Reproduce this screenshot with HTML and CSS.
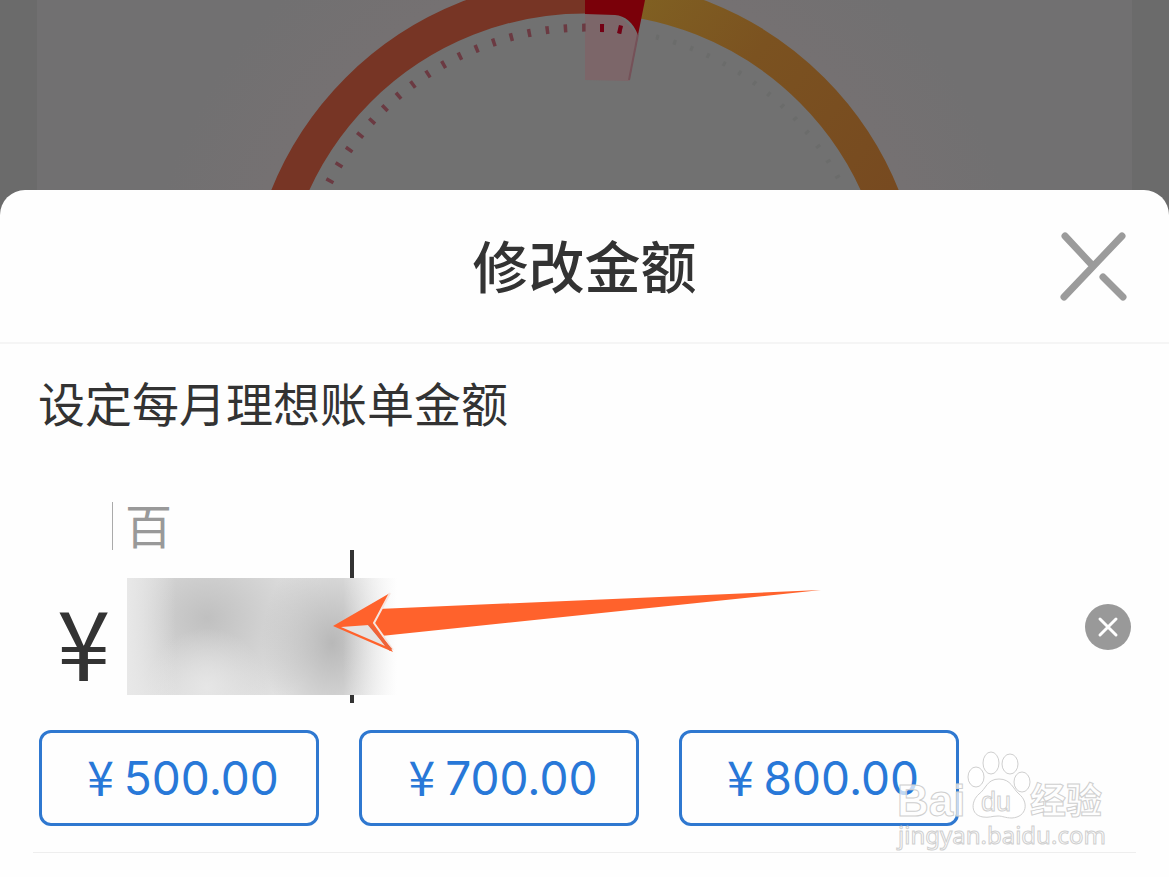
FILE: index.html
```html
<!DOCTYPE html>
<html lang="zh-CN">
<head>
<meta charset="utf-8">
<meta name="viewport" content="width=device-width, initial-scale=1">
<title>修改金额</title>
<link rel="stylesheet" href="styles.css">
</head>
<body>
<div class="screen">
  <div class="backdrop" aria-hidden="true">
    <svg class="gauge" viewBox="0 0 1169 215" fill="none">
      <defs>
        <linearGradient id="gold" x1="640" y1="0" x2="890" y2="190" gradientUnits="userSpaceOnUse">
          <stop offset="0" stop-color="#806022"/>
          <stop offset="0.4" stop-color="#7b5220"/>
          <stop offset="1" stop-color="#774a20"/>
        </linearGradient>
        <radialGradient id="glow" cx="585" cy="317" r="440" gradientUnits="userSpaceOnUse">
          <stop offset="0.68" stop-color="#717171"/>
          <stop offset="0.78" stop-color="#757172"/>
          <stop offset="1" stop-color="#717071"/>
        </radialGradient>
      </defs>
      <rect width="1169" height="215" fill="#6b6b6b"/>
      <rect x="37" width="1095" height="215" fill="url(#glow)"/>
      <path d="M264 317A321 321 0 0 1 585 -4" stroke="#773525" stroke-width="35"/>
      <path d="M585 -4A321 321 0 0 1 906 317" stroke="url(#gold)" stroke-width="35"/>
      <path d="M585 14H618L638 34L629 81L585 80Z" fill="#7c6669"/>
      <path d="M638 34L629 80" stroke="#755158" stroke-width="2"/>
      <path d="M585 0H645L638 35C633 22 625 16 615 15L585 14Z" fill="#7a0009"/>
      <path d="M622 30A289 289 0 0 0 296 317" stroke="#6b3a42" stroke-width="8" stroke-dasharray="3.5 14.8"/>
      <path d="M600 28L604 28M618 29L622 30" stroke="#740014" stroke-width="8"/>
      <path d="M656 37A289 289 0 0 1 874 317" stroke="#6b6c6b" stroke-width="5" stroke-dasharray="3 15"/>
    </svg>
  </div>

  <main class="sheet">
    <header class="sheet-header">
      <h1 class="title">修改金额</h1>
      <button class="close" type="button" aria-label="关闭">
        <svg viewBox="0 0 68 72" width="68" height="72" fill="none" stroke="#9b9b9b" stroke-width="7" stroke-linecap="round">
          <path d="M6 6L33 35M63 6L5 67M44 47L64 67"/>
        </svg>
      </button>
    </header>

    <form class="form">
      <label class="label" for="amount">设定每月理想账单金额</label>
      <div class="unit">百</div>
      <div class="amount-row">
        <span class="currency">¥</span>
        <div class="field">
          <input class="amount" id="amount" type="text" inputmode="decimal">
          <span class="caret"></span>
          <span class="mask"></span>
          <svg class="arrow" viewBox="0 0 490 70" width="490" height="70">
            <path d="M47 21L490 2L50 48L40 36Z" fill="#ff622c"/>
            <path d="M2 38L59 5L44 34L62 64Z" fill="#ff622c"/>
            <path d="M10 39L38 37L54 58Z" fill="#e5e3e2"/>
            <path d="M59 5L43 35L62 62" fill="none" stroke="#f6e5df" stroke-width="2"/>
            <path d="M38 36L60 62" stroke="#ed633a" stroke-width="3"/>
          </svg>
        </div>
        <button class="clear" type="button" aria-label="清除">
          <svg viewBox="0 0 46 46" width="46" height="46" fill="none" stroke="#fff" stroke-width="3" stroke-linecap="round">
            <path d="M15 15L31 31M31 15L15 31"/>
          </svg>
        </button>
      </div>
      <div class="presets">
        <button class="preset" type="button"><span>¥</span><span>500.00</span></button>
        <button class="preset" type="button"><span>¥</span><span>700.00</span></button>
        <button class="preset" type="button"><span>¥</span><span>800.00</span></button>
      </div>
    </form>
  </main>

  <svg class="watermark" viewBox="0 0 214 106" width="214" height="106">
    <g class="mark">
      <text class="mark-brand" x="2" y="66">Bai</text>
      <ellipse cx="81" cy="27" rx="8" ry="10"/>
      <ellipse cx="96" cy="13" rx="8" ry="11"/>
      <ellipse cx="115" cy="14" rx="8" ry="10"/>
      <ellipse cx="127" cy="32" rx="8" ry="10"/>
      <path d="M104 29C116 29 118 39 124 44C134 52 132 67 117 68C110 68 108 66 103 66C97 66 94 68 88 67C75 65 76 51 84 44C91 39 92 29 104 29Z"/>
      <text class="mark-du" x="86" y="61">du</text>
      <text class="mark-cn" x="135" y="64">经验</text>
      <text class="mark-url" x="3" y="94">jingyan.baidu.com</text>
    </g>
  </svg>
</div>
</body>
</html>
```
FILE: styles.css
```css
* {
  box-sizing: border-box;
}

body {
  margin: 0;
  background: #fefefe;
  color: #333;
  font-family: "Noto Sans CJK SC", sans-serif;
}

button {
  padding: 0;
  border: 0;
  background: none;
  font: inherit;
  cursor: pointer;
}

svg {
  display: block;
}

.screen {
  position: relative;
  min-height: 100vh;
  overflow: hidden;
}

.backdrop {
  height: 215px;
  background: #6b6b6b;
}

.gauge {
  width: 100%;
  height: 215px;
}

.sheet {
  position: relative;
  margin-top: -25px;
  background: #fefefe;
  border-radius: 25px 25px 0 0;
}

.sheet-header {
  display: grid;
  grid-template-columns: 1fr auto 1fr;
  align-items: center;
  height: 154px;
  padding: 0 42px;
  border-bottom: 2px solid #f5f5f5;
}

.title {
  grid-column: 2;
  margin: 0;
  padding-bottom: 4px;
  font-size: 56px;
  line-height: 80px;
  font-weight: 500;
}

.close {
  justify-self: end;
}

.form {
  margin: 0 33px;
  padding: 26px 5px 26px;
  border-bottom: 1px solid #eee;
}

.label {
  display: block;
  font-size: 47px;
  line-height: 64px;
}

.unit {
  width: max-content;
  height: 48px;
  margin: 68px 0 0 74px;
  padding-left: 12px;
  border-left: 1px solid #aaa;
  color: #999;
  font-size: 47px;
  line-height: 44px;
}

.amount-row {
  display: flex;
  align-items: center;
  height: 153px;
  padding: 0 0 0 19px;
}

.currency {
  width: 70px;
  padding-top: 26px;
  font-size: 96px;
  line-height: 92px;
}

.field {
  position: relative;
  flex: 1;
  height: 153px;
}

.amount {
  width: 100%;
  height: 100%;
  padding: 0;
  border: 0;
  outline: 0;
  background: none;
  font-size: 92px;
}

.caret {
  position: absolute;
  top: 0;
  left: 223px;
  width: 4px;
  height: 153px;
  background: #333;
}

.mask {
  position: absolute;
  top: 28px;
  left: 0;
  width: 270px;
  height: 117px;
  background:
    linear-gradient(90deg, transparent 80%, #fefefe 100%),
    linear-gradient(90deg, #e8e8e8, #e8e8e800 18%),
    radial-gradient(ellipse 70px 95px at 205px 65px, #b8b8b8, #b8b8b800),
    radial-gradient(ellipse 60px 60px at 80px 110px, #e6e6e6, #e6e6e600),
    radial-gradient(ellipse 120px 105px at 80px 40px, #c0c0c0, #c6c6c600),
    #e4e4e4;
}

.arrow {
  position: absolute;
  top: 38px;
  left: 204px;
}

.clear {
  border-radius: 50%;
  background: #999;
}

.presets {
  display: flex;
  gap: 40px;
  margin-top: 27px;
  padding-left: 1px;
}

.preset {
  display: flex;
  flex: 0 1 280px;
  align-items: center;
  justify-content: center;
  gap: 10px;
  height: 96px;
  padding-left: 8px;
  border: 3px solid #2f78d0;
  border-radius: 12px;
  color: #2878d8;
  font-family: Inter, "Noto Sans CJK SC", sans-serif;
  font-size: 46px;
  line-height: 56px;
}

.preset span:first-child {
  padding-bottom: 6px;
  font-family: "Noto Sans CJK SC", sans-serif;
  font-size: 48px;
}

.watermark {
  position: absolute;
  top: 750px;
  right: 60px;
  pointer-events: none;
}

.mark {
  fill: #fffb;
  stroke: #cfcfcf;
  stroke-width: 1px;
}

.mark-brand {
  font: bold 44px "Liberation Sans", sans-serif;
}

.mark-du {
  font: 27px "Liberation Sans", sans-serif;
}

.mark-cn {
  font: bold 36px "Noto Sans CJK SC", sans-serif;
}

.mark-url {
  font: 24px "Noto Sans", sans-serif;
}
```
